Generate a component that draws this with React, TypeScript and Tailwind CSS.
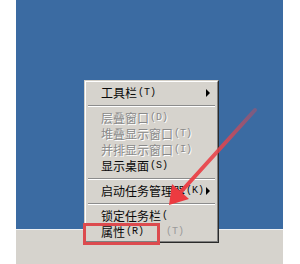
import React from "react";

const font = { fontFamily: '"Noto Sans CJK SC", "Noto Sans", sans-serif' };

function Label({ text }: { text: string }) {
  const i = text.indexOf("(");
  const cjk = i >= 0 ? text.slice(0, i) : text;
  const latin = i >= 0 ? text.slice(i) : "";
  return (
    <>
      <span>{cjk}</span>
      {latin && (
        <span className="ml-[1px] text-[10px]" style={{ fontFamily: '"Liberation Mono", monospace' }}>
          {latin}
        </span>
      )}
    </>
  );
}

function Item({ label, disabled, arrow, extra }: { label: string; disabled?: boolean; arrow?: boolean; extra?: string }) {
  return (
    <div className="h-[16px] flex items-center pl-[15px] pr-[6px] relative whitespace-nowrap">
      <span
        className={
          "flex items-center whitespace-nowrap " +
          (disabled ? "text-[#8a8a8a] [text-shadow:1px_1px_0_#ffffff]" : "text-[#0a0a0a]")
        }
      >
        <Label text={label} />
      </span>
      {extra && (
        <span className="ml-[22px] text-[10px] text-[#9a9a9a]" style={{ fontFamily: '"Liberation Mono", monospace' }}>
          {extra}
        </span>
      )}
      {arrow && (
        <span className="absolute right-[7px] top-[4px] w-0 h-0 border-y-[4px] border-y-transparent border-l-[4px] border-l-black" />
      )}
    </div>
  );
}

function Sep() {
  return (
    <div className="h-[9px] flex flex-col justify-center px-[2px]">
      <div className="h-px bg-[#8c8c8c]" />
      <div className="h-px bg-white" />
    </div>
  );
}

export default function App() {
  return (
    <div className="relative w-[300px] h-[264px] bg-white overflow-hidden" style={font}>
      <div className="ml-[16px] w-[267px] h-full flex flex-col">
        <div className="h-[229px] bg-[#3b6ba2]" />
        <div className="h-px bg-[#eef0f2]" />
        <div className="flex-1 bg-[#d6d3cd]" />
      </div>

      <div className="absolute left-[84px] top-[80px] w-[135px] border border-t-[#d4d0c8] border-l-[#d4d0c8] border-b-[#2a2a2a] border-r-[#2a2a2a] bg-[#d6d3cd]">
        <div className="border border-t-white border-l-white border-b-[#808080] border-r-[#808080] pt-[3px] pb-[1px] text-[12px] leading-none">
          <Item label="工具栏(T)" arrow />
          <Sep />
          <Item label="层叠窗口(D)" disabled />
          <Item label="堆叠显示窗口(T)" disabled />
          <Item label="并排显示窗口(I)" disabled />
          <Item label="显示桌面(S)" />
          <Sep />
          <Item label="启动任务管理器(K)" arrow />
          <Sep />
          <Item label="锁定任务栏(" />
          <Item label="属性(R)" extra="(T)" />
        </div>
      </div>

      <div className="absolute left-[83px] top-[223px] w-[77px] h-[22px] border-[3px] border-[#dc4a4e]" />

      <svg className="absolute left-0 top-0 pointer-events-none" width="300" height="264" viewBox="0 0 300 264">
        <defs>
          <linearGradient id="g" x1="255" y1="110" x2="175" y2="198" gradientUnits="userSpaceOnUse">
            <stop offset="0" stopColor="#e8434a" stopOpacity="0.35" />
            <stop offset="0.4" stopColor="#e8434a" stopOpacity="0.85" />
            <stop offset="1" stopColor="#ec3b40" stopOpacity="1" />
          </linearGradient>
        </defs>
        <line x1="255" y1="110" x2="178" y2="195" stroke="url(#g)" strokeWidth="4" strokeLinecap="round" />
        <polygon points="169,205 172,184 189,199" fill="#ec3b40" />
      </svg>
    </div>
  );
}
